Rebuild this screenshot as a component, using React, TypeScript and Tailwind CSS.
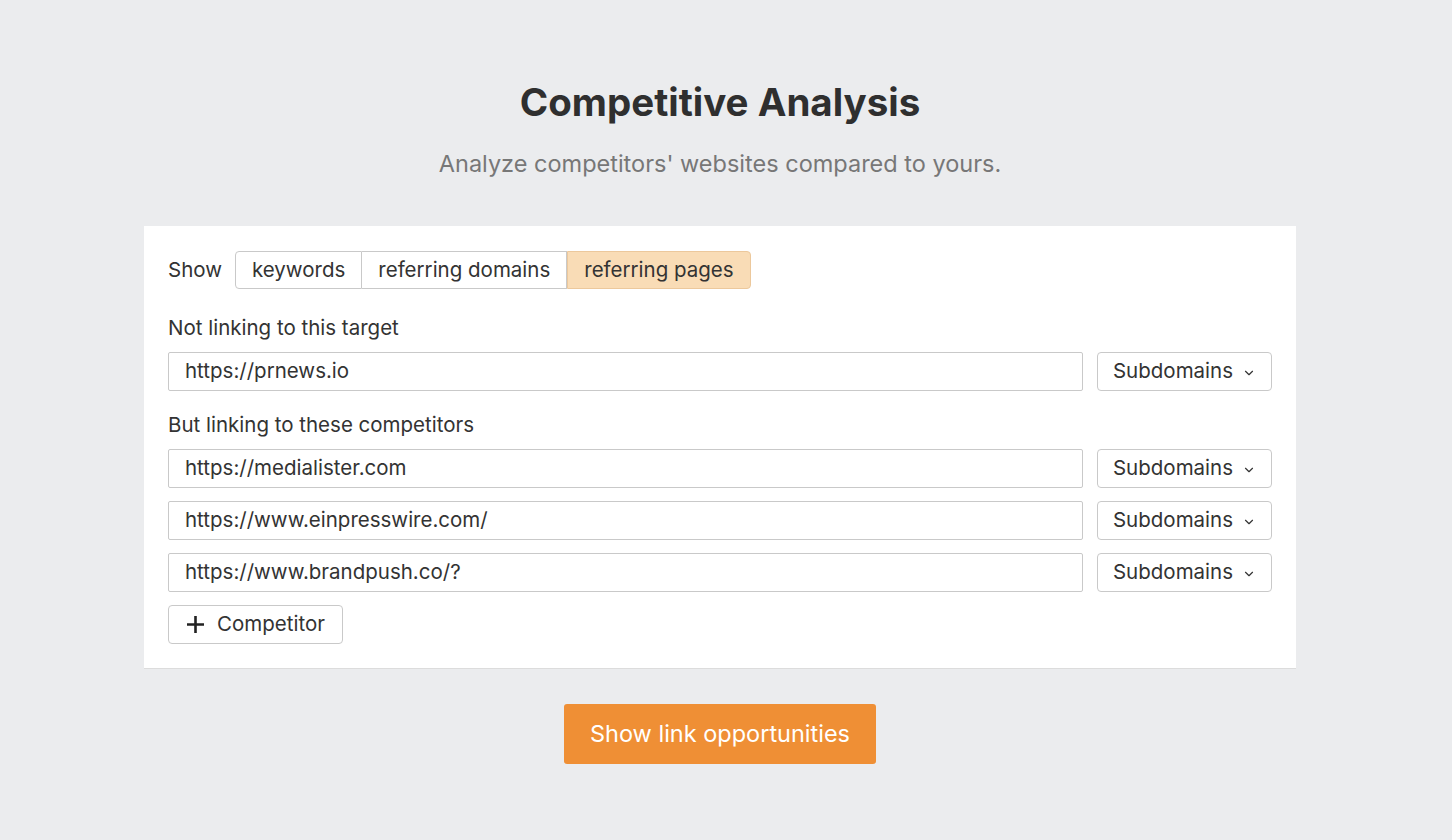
import { ChevronDown } from "lucide-react";

const competitors = [
  "https://medialister.com",
  "https://www.einpresswire.com/",
  "https://www.brandpush.co/?",
];

const segments = ["keywords", "referring domains", "referring pages"];

function UrlRow({ value }: { value: string }) {
  return (
    <div className="flex gap-[14px]">
      <div className="flex h-[39px] flex-1 items-center rounded-[2px] border border-[#c9c9c9] bg-white px-4 text-[20.5px] text-[#333]">
        {value}
      </div>
      <button className="flex h-[39px] w-[175px] items-center justify-center gap-[9px] rounded-[4px] border border-[#c9c9c9] bg-white text-[20.5px] text-[#333]">
        Subdomains
        <ChevronDown size={14} strokeWidth={2} className="mt-[2px]" />
      </button>
    </div>
  );
}

export default function App() {
  return (
    <div
      className="flex min-h-[840px] flex-col items-center bg-[#ebecee] pr-[12px] text-[#333]"
      style={{ fontFamily: "Inter, 'Noto Sans', sans-serif" }}
    >
      <h1 className="mt-[78px] text-[38.5px] leading-[48px] font-bold text-[#2f2f2f]">
        Competitive Analysis
      </h1>
      <p className="mt-[23px] text-[23.5px] leading-[30px] text-[#777]">
        Analyze competitors' websites compared to yours.
      </p>

      <div className="mt-[47px] w-[1152px] bg-white px-6 pt-[25px] pb-[24px] shadow-[0_1px_0_#dcdcdc]">
        <div className="flex items-center">
          <span className="mr-[13px] text-[20.5px]">Show</span>
          <div className="flex h-[38px]">
            {segments.map((s, i) => {
              const active = i === 2;
              return (
                <div
                  key={s}
                  className={
                    active
                      ? "flex items-center rounded-r-[4px] border border-[#ecc89c] bg-[#f9dcb6] px-[16px] text-[20.5px] text-[#333]"
                      : i === 0
                        ? "flex items-center rounded-l-[4px] border border-[#c9c9c9] bg-white px-[16px] text-[20.5px]"
                        : "flex items-center border border-l-0 border-[#c9c9c9] bg-white px-[16px] text-[20.5px]"
                  }
                >
                  {s}
                </div>
              );
            })}
          </div>
        </div>

        <div className="mt-[25px] text-[20.5px] leading-[28px]">Not linking to this target</div>
        <div className="mt-[10px]">
          <UrlRow value="https://prnews.io" />
        </div>

        <div className="mt-[20px] text-[20.5px] leading-[28px]">But linking to these competitors</div>
        <div className="mt-[10px] flex flex-col gap-[13px]">
          {competitors.map((c) => (
            <UrlRow key={c} value={c} />
          ))}
        </div>

        <button className="mt-[13px] flex h-[39px] w-[175px] items-center justify-center gap-[12px] rounded-[4px] border border-[#c9c9c9] bg-white text-[20.5px]">
          <svg width="19" height="19" viewBox="0 0 19 19" className="text-[#222]">
            <path d="M9.5 1v17M1 9.5h17" stroke="currentColor" strokeWidth="2.6" />
          </svg>
          Competitor
        </button>
      </div>

      <button className="mt-[36px] h-[60px] w-[312px] rounded-[3px] bg-[#ef8f35] text-[23.5px] text-white">
        Show link opportunities
      </button>
    </div>
  );
}
